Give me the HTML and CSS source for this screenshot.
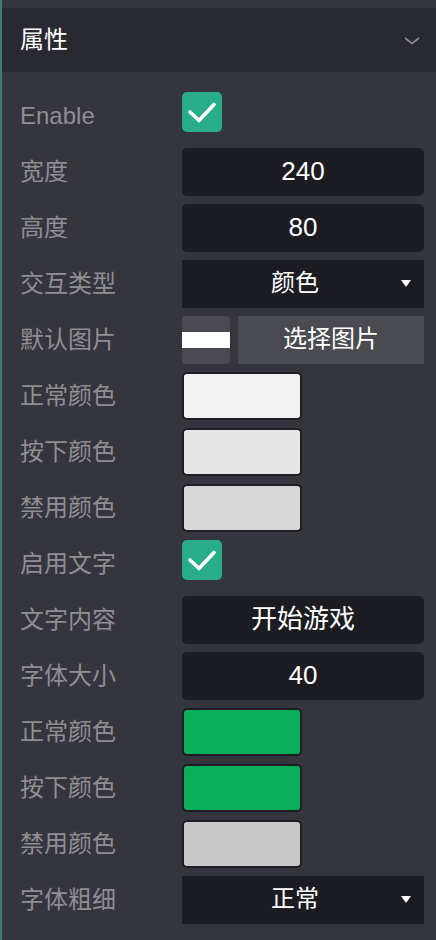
FILE: index.html
```html
<!DOCTYPE html>
<html>
<head>
<meta charset="utf-8">
<link rel="stylesheet" href="styles.css">
</head>
<body>
<div class="panel">
  <div class="topstrip"></div>
  <div class="header">
    <span class="title">属性</span>
    <svg class="chev" width="16" height="10" viewBox="0 0 16 10"><path d="M1 2 L8 7.5 L15 2" fill="none" stroke="#8a8a90" stroke-width="1.6"/></svg>
  </div>
  <div class="rows">
    <div class="row"><span class="label">Enable</span><div class="check"><svg width="40" height="40" viewBox="0 0 40 40"><path d="M8 20 L17 28.5 L32 12.5" fill="none" stroke="#fff" stroke-width="3.6" stroke-linecap="round" stroke-linejoin="round"/></svg></div></div>
    <div class="row"><span class="label">宽度</span><div class="input">240</div></div>
    <div class="row"><span class="label">高度</span><div class="input">80</div></div>
    <div class="row"><span class="label">交互类型</span><div class="select">颜色<span class="arrow"></span></div></div>
    <div class="row"><span class="label">默认图片</span><div class="imgpick"><div class="thumb"><div class="thumb-img"></div></div><div class="btn">选择图片</div></div></div>
    <div class="row"><span class="label">正常颜色</span><div class="swatch c1"></div></div>
    <div class="row"><span class="label">按下颜色</span><div class="swatch c2"></div></div>
    <div class="row"><span class="label">禁用颜色</span><div class="swatch c3"></div></div>
    <div class="row"><span class="label">启用文字</span><div class="check"><svg width="40" height="40" viewBox="0 0 40 40"><path d="M8 20 L17 28.5 L32 12.5" fill="none" stroke="#fff" stroke-width="3.6" stroke-linecap="round" stroke-linejoin="round"/></svg></div></div>
    <div class="row"><span class="label">文字内容</span><div class="input">开始游戏</div></div>
    <div class="row"><span class="label">字体大小</span><div class="input">40</div></div>
    <div class="row"><span class="label">正常颜色</span><div class="swatch green"></div></div>
    <div class="row"><span class="label">按下颜色</span><div class="swatch green"></div></div>
    <div class="row"><span class="label">禁用颜色</span><div class="swatch c4"></div></div>
    <div class="row"><span class="label">字体粗细</span><div class="select">正常<span class="arrow"></span></div></div>
  </div>
</div>
</body>
</html>
```
FILE: styles.css
```css
html, body {
  margin: 0;
  padding: 0;
  background: #35353e;
}
body {
  font-family: "Liberation Sans", "Noto Sans CJK SC", sans-serif;
}
.panel {
  width: 434px;
  height: 940px;
  border-left: 2px solid #3d7f6a;
  background: #35353e;
  overflow: hidden;
}
.topstrip {
  height: 8px;
  background: #34343c;
}
.header {
  height: 64px;
  background: #292a31;
  display: flex;
  align-items: center;
  justify-content: space-between;
  padding: 0 16px 0 18px;
}
.title {
  color: #ffffff;
  font-size: 24px;
  line-height: 64px;
}
.chev {
  display: block;
  margin-top: 2px;
}
.rows {
  display: flex;
  flex-direction: column;
  gap: 8px;
  padding: 20px 12px 0 18px;
}
.row {
  display: grid;
  grid-template-columns: 162px 242px;
  height: 48px;
  align-items: center;
}
.label {
  color: #8e8e93;
  font-size: 24px;
  line-height: 48px;
}
.check {
  align-self: start;
  width: 40px;
  height: 40px;
  border-radius: 5px;
  background: #27ae89;
}
.check svg {
  display: block;
}
.input {
  height: 48px;
  border-radius: 5px;
  background: #1c1d23;
  color: #ffffff;
  font-size: 26px;
  line-height: 46px;
  text-align: center;
}
.select {
  position: relative;
  height: 48px;
  background: #1c1d23;
  color: #ffffff;
  font-size: 24px;
  line-height: 46px;
  text-align: center;
  padding-right: 16px;
  box-sizing: border-box;
}
.arrow {
  position: absolute;
  right: 13px;
  top: 20px;
  width: 0;
  height: 0;
  border-left: 5px solid transparent;
  border-right: 5px solid transparent;
  border-top: 7px solid #ffffff;
}
.imgpick {
  display: flex;
  gap: 8px;
  height: 48px;
}
.thumb {
  width: 48px;
  height: 48px;
  border-radius: 4px;
  background: #4a4a50;
  display: flex;
  align-items: center;
  overflow: hidden;
}
.thumb-img {
  width: 48px;
  height: 16px;
  background: #ffffff;
}
.btn {
  flex: 1;
  height: 48px;
  background: #4a4b50;
  color: #ffffff;
  font-size: 24px;
  line-height: 46px;
  text-align: center;
}
.swatch {
  width: 120px;
  height: 48px;
  box-sizing: border-box;
  border: 2px solid #1e1f25;
  border-radius: 5px;
}
.c1 { background: #f2f2f2; }
.c2 { background: #e6e6e6; }
.c3 { background: #d8d8d8; }
.c4 { background: #c8c8c8; }
.green { background: #0aad58; }
```
